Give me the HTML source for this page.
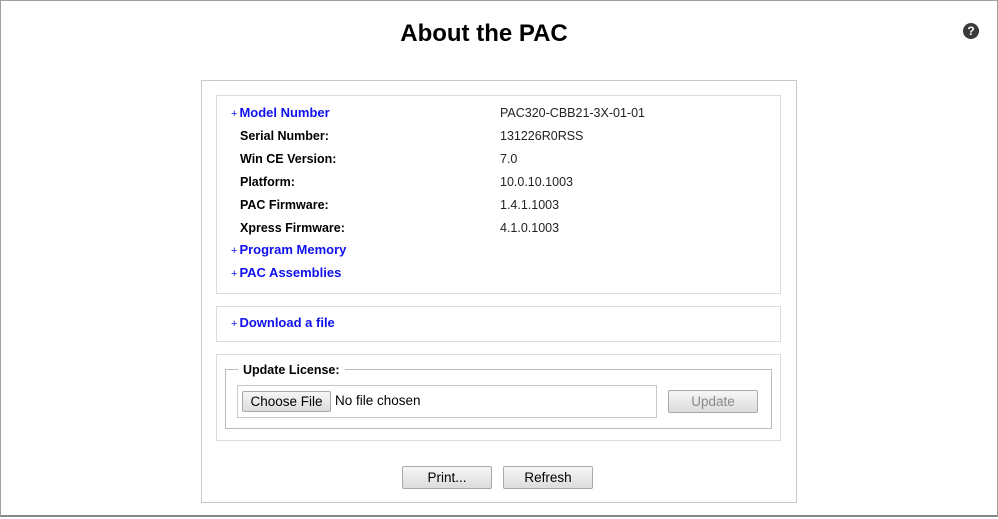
<!DOCTYPE html>
<html><head><style>
*{margin:0;padding:0;box-sizing:border-box}
body{width:998px;height:519px;background:#fff;font-family:"Liberation Sans",sans-serif;position:relative;overflow:hidden}
.frame{position:absolute;left:0;top:0;width:998px;height:517px;border:1px solid #a0a0a0;border-bottom:2px solid #888}
.abs{position:absolute}
h1{position:absolute;left:0;width:968px;top:20px;text-align:center;font-size:24px;font-weight:bold;color:#000}
.box{position:absolute;border:1px solid #c8c8c8}
.sec{position:absolute;border:1px solid #dcdcdc}
.row{position:absolute;font-size:12.5px;line-height:16px}
.lbl{left:240px;font-weight:bold;color:#000}
.lnk{left:231px;font-weight:bold;color:#1010ee;font-size:13px}
.lnk span{font-weight:normal;font-size:11px;margin-right:2px}
.val{left:500px;color:#222;font-size:12.5px}
.btn{position:absolute;border:1px solid #a9a9a9;border-radius:2px;background:linear-gradient(#f6f6f6,#dcdcdc);font-size:13.5px;text-align:center;color:#000}
</style></head><body>
<div class="frame"></div>
<h1>About the PAC</h1>
<div class="abs" style="left:963px;top:23px;width:16px;height:16px;border-radius:50%;background:#3a3a3a;color:#fff;font-size:12px;font-weight:bold;text-align:center;line-height:16px">?</div>
<div class="box" style="left:201px;top:80px;width:596px;height:423px"></div>
<div class="sec" style="left:216px;top:95px;width:565px;height:199px"></div>
<div class="row lnk" style="top:105px"><span>+</span>Model Number</div>
<div class="row val" style="top:105px">PAC320-CBB21-3X-01-01</div>
<div class="row lbl" style="top:128px">Serial Number:</div>
<div class="row val" style="top:128px">131226R0RSS</div>
<div class="row lbl" style="top:151px">Win CE Version:</div>
<div class="row val" style="top:151px">7.0</div>
<div class="row lbl" style="top:174px">Platform:</div>
<div class="row val" style="top:174px">10.0.10.1003</div>
<div class="row lbl" style="top:197px">PAC Firmware:</div>
<div class="row val" style="top:197px">1.4.1.1003</div>
<div class="row lbl" style="top:220px">Xpress Firmware:</div>
<div class="row val" style="top:220px">4.1.0.1003</div>
<div class="row lnk" style="top:242px"><span>+</span>Program Memory</div>
<div class="row lnk" style="top:265px"><span>+</span>PAC Assemblies</div>
<div class="sec" style="left:216px;top:306px;width:565px;height:36px"></div>
<div class="row lnk" style="top:315px"><span>+</span>Download a file</div>
<div class="sec" style="left:216px;top:354px;width:565px;height:87px"></div>
<div class="abs" style="left:225px;top:369px;width:547px;height:60px;border:1px solid #bbb"></div>
<div class="abs" style="left:238px;top:363px;background:#fff;padding:0 5px;font-size:12.5px;font-weight:bold">Update License:</div>
<div class="abs" style="left:237px;top:385px;width:420px;height:33px;border:1px solid #c8c8c8"></div>
<div class="btn" style="left:242px;top:391px;width:89px;height:21px;line-height:19px">Choose File</div>
<div class="abs" style="left:335px;top:393px;font-size:13.5px">No file chosen</div>
<div class="btn" style="left:668px;top:390px;width:90px;height:23px;line-height:21px;color:#888">Update</div>
<div class="btn" style="left:402px;top:466px;width:90px;height:23px;line-height:21px">Print...</div>
<div class="btn" style="left:503px;top:466px;width:90px;height:23px;line-height:21px">Refresh</div>
</body></html>
